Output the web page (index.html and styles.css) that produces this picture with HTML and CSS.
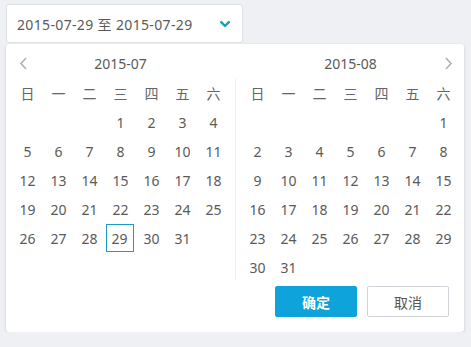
FILE: index.html
```html
<!DOCTYPE html>
<html lang="zh">
<head>
<meta charset="utf-8">
<link rel="stylesheet" href="styles.css">
</head>
<body>
<div class="wrap">
  <div class="input">
    <span class="value">2015-07-29 至 2015-07-29</span>
    <svg class="caret" width="10" height="7" viewBox="0 0 10 7"><path d="M1.2 1.2 L5 5 L8.8 1.2" fill="none" stroke="#1a9cc4" stroke-width="2.4" stroke-linecap="round" stroke-linejoin="round"/></svg>
  </div>
  <div class="panel">
    <div class="cals">
      <div class="cal">
        <div class="nav">
          <svg class="arrow prev" width="9" height="13" viewBox="0 0 9 13"><path d="M7 1 L2 6.5 L7 12" fill="none" stroke="#b0b0b0" stroke-width="1.6"/></svg>
          <span class="title">2015-07</span>
        </div>
        <div class="grid">
          <span class="wd">日</span><span class="wd">一</span><span class="wd">二</span><span class="wd">三</span><span class="wd">四</span><span class="wd">五</span><span class="wd">六</span>
          <span></span><span></span><span></span><span>1</span><span>2</span><span>3</span><span>4</span>
          <span>5</span><span>6</span><span>7</span><span>8</span><span>9</span><span>10</span><span>11</span>
          <span>12</span><span>13</span><span>14</span><span>15</span><span>16</span><span>17</span><span>18</span>
          <span>19</span><span>20</span><span>21</span><span>22</span><span>23</span><span>24</span><span>25</span>
          <span>26</span><span>27</span><span>28</span><span class="sel"><b>29</b></span><span>30</span><span>31</span><span></span>
        </div>
      </div>
      <div class="divider"></div>
      <div class="cal">
        <div class="nav">
          <span class="title">2015-08</span>
          <svg class="arrow next" width="9" height="13" viewBox="0 0 9 13"><path d="M2 1 L7 6.5 L2 12" fill="none" stroke="#b0b0b0" stroke-width="1.6"/></svg>
        </div>
        <div class="grid">
          <span class="wd">日</span><span class="wd">一</span><span class="wd">二</span><span class="wd">三</span><span class="wd">四</span><span class="wd">五</span><span class="wd">六</span>
          <span></span><span></span><span></span><span></span><span></span><span></span><span>1</span>
          <span>2</span><span>3</span><span>4</span><span>5</span><span>6</span><span>7</span><span>8</span>
          <span>9</span><span>10</span><span>11</span><span>12</span><span>13</span><span>14</span><span>15</span>
          <span>16</span><span>17</span><span>18</span><span>19</span><span>20</span><span>21</span><span>22</span>
          <span>23</span><span>24</span><span>25</span><span>26</span><span>27</span><span>28</span><span>29</span>
          <span>30</span><span>31</span>
        </div>
      </div>
    </div>
    <div class="actions">
      <button class="btn primary">确定</button>
      <button class="btn">取消</button>
    </div>
  </div>
</div>
</body>
</html>
```
FILE: styles.css
```css
html, body {
  margin: 0;
  padding: 0;
  background: #eef0f4;
}
body {
  font-family: "Noto Sans", "Noto Sans CJK SC", sans-serif;
  font-size: 14px;
  color: #5a5a5a;
}
.wrap {
  padding: 4px 0 0 6px;
}
.input {
  box-sizing: border-box;
  width: 237px;
  height: 39px;
  background: #fff;
  border: 1px solid #dde0e5;
  border-radius: 3px;
  display: flex;
  align-items: center;
  justify-content: space-between;
  padding: 0 12px 0 10px;
}
.value {
  color: #5a5a5a;
  font-size: 14px;
  letter-spacing: 0.35px;
}
.caret {
  display: block;
  margin-top: 1px;
}
.panel {
  box-sizing: border-box;
  width: 458px;
  margin-top: 1px;
  background: #fff;
  border-radius: 3px;
  box-shadow: 0 1px 3px rgba(0, 0, 0, 0.18);
  padding: 0 5px 15px 6px;
}
.cals {
  display: flex;
  align-items: flex-start;
}
.cal {
  width: 217px;
}
.divider {
  width: 1px;
  align-self: stretch;
  background: #eeeeee;
  margin: 35px 6px 2px 6px;
}
.nav {
  height: 28px;
  padding-top: 5px;
  margin-bottom: 2px;
  display: flex;
  align-items: center;
  justify-content: center;
  position: relative;
}
.title {
  color: #5a5a5a;
  font-size: 14px;
}
.arrow {
  position: absolute;
  top: 13px;
}
.prev { left: 7px; }
.next { right: 6px; }
.grid {
  display: grid;
  grid-template-columns: repeat(7, 31px);
  grid-auto-rows: 29px;
}
.grid span {
  display: flex;
  align-items: center;
  justify-content: center;
  color: #5a5a5a;
  font-size: 14px;
}
.grid .wd {
  color: #666;
  margin-top: -2px;
}
.grid .sel b {
  font-weight: normal;
  box-sizing: border-box;
  width: 28px;
  height: 28px;
  border: 1px solid #1a9cc4;
  display: flex;
  align-items: center;
  justify-content: center;
  margin: -1px 2px 0 0;
}
.actions {
  display: flex;
  justify-content: flex-end;
  gap: 10px;
  margin-top: 4px;
  padding-right: 10px;
}
.btn {
  box-sizing: border-box;
  width: 82px;
  height: 31px;
  font-family: "Noto Sans", "Noto Sans CJK SC", sans-serif;
  font-size: 14px;
  color: #555;
  background: #fff;
  border: 1px solid #d0d3d8;
  border-radius: 2px;
  padding: 0;
}
.btn.primary {
  background: #0fa3dc;
  border-color: #0fa3dc;
  color: #fff;
  font-weight: bold;
}
```
